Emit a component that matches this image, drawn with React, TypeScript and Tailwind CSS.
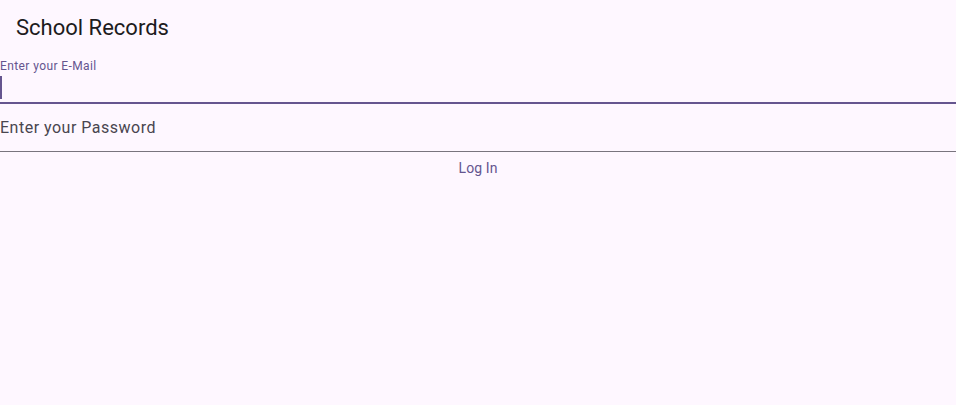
export default function App() {
  return (
    <div className="min-h-[405px] w-full bg-[#fef7ff] font-['Roboto',sans-serif]">
      {/* App bar */}
      <header className="h-14 flex items-center px-4">
        <h1 className="text-[22px] text-[#1d1b20] leading-7">School Records</h1>
      </header>

      {/* E-Mail field (focused) */}
      <div className="relative h-12 border-b-2 border-[#65558f]">
        <div className="pt-[2px] text-[12px] leading-4 text-[#65558f] tracking-[0.4px]">Enter your E-Mail</div>
        <div className="mt-[2px] w-[2px] h-[23px] bg-[#65558f]" />
      </div>

      {/* Password field */}
      <div className="h-12 flex items-center border-b border-[#79747e]">
        <span className="pt-[1px] text-base leading-6 text-[#49454f] tracking-[0.5px]">Enter your Password</span>
      </div>

      {/* Log In */}
      <div className="flex justify-center">
        <button className="h-8 px-3 text-sm text-[#65558f] tracking-[0.1px] leading-5">Log In</button>
      </div>
    </div>
  )
}
